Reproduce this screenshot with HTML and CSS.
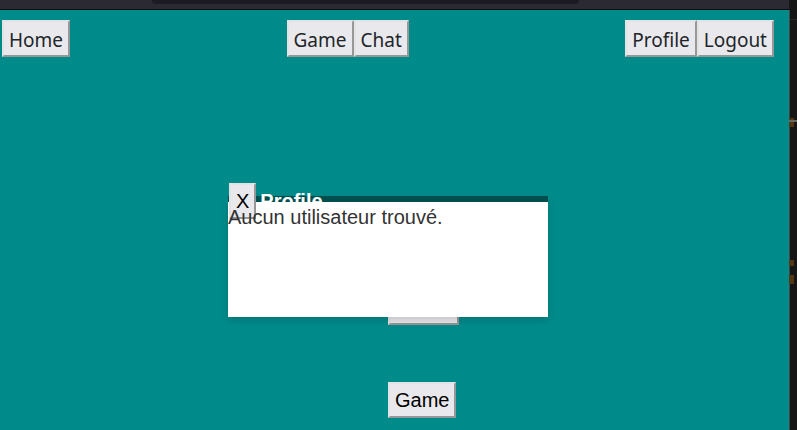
FILE: index.html
```html
<!DOCTYPE html>
<html lang="fr">
<head>
<meta charset="utf-8">
<title>Profile</title>
<meta name="viewport" content="width=device-width, initial-scale=1">
<link rel="stylesheet" href="styles.css">
</head>
<body>
<div class="browser">
  <div class="toolbar"><div class="address"></div></div>
  <div class="desktop">
    <nav class="nav">
      <div class="group"><button class="btn" type="button">Home</button></div>
      <div class="group"><button class="btn" type="button">Game</button><button class="btn" type="button">Chat</button></div>
      <div class="group"><button class="btn" type="button">Profile</button><button class="btn" type="button">Logout</button></div>
    </nav>
    <main class="workspace">
      <div class="launchers">
        <button class="btn btn-blank" type="button" aria-label="Application"></button>
        <button class="btn" type="button">Game</button>
      </div>
      <section class="window" aria-labelledby="window-title">
        <header class="titlebar">
          <button class="btn close" type="button">X</button>
          <h1 class="title" id="window-title">Profile</h1>
        </header>
        <div class="content"><p class="message">Aucun utilisateur trouvé.</p></div>
      </section>
    </main>
  </div>
</div>
<aside class="edge">
  <svg width="8" height="430" aria-hidden="true">
    <path d="M0.5 10v420" stroke="#444"/>
    <path d="M1 19.5h7" stroke="#292929"/>
    <path d="M0 118h5v9H0zM0 260h5v6H0zM0 275h5v9H0z" fill="#533612"/>
    <path d="M0 120h8v2H0z" fill="#6c6761"/>
  </svg>
</aside>
</body>
</html>
```
FILE: styles.css
```css
* {
  box-sizing: border-box;
}

body {
  margin: 0;
  min-height: 100vh;
  display: flex;
  overflow: hidden;
  background: #161616;
  font: 20px/24px "Liberation Sans", Arial, sans-serif;
  color: #333;
}

.browser {
  flex: 1;
  display: flex;
  flex-direction: column;
}

.toolbar {
  height: 10px;
  padding: 0 210px 0 152px;
  background: #2b2a33;
  border-bottom: 1px solid #0c0c0d;
}

.address {
  height: 4px;
  background: #1c1b22;
  border-radius: 0 0 4px 4px;
}

.desktop {
  flex: 1;
  display: flex;
  flex-direction: column;
  padding: 10px 13px 0 0;
  background: #008b8b;
}

.nav {
  display: flex;
  justify-content: space-between;
  padding: 0 2px;
  font-family: "Noto Sans", "Open Sans", sans-serif;
  font-size: 19px;
}

.group {
  display: flex;
}

.btn {
  height: 36px;
  padding: 0 5px;
  border: 2px solid;
  border-color: #e3e3e3 #979797 #979797 #e3e3e3;
  background: #e9e9ed;
  font: inherit;
  color: #000;
}

.nav .btn {
  height: 37px;
  padding-top: 2px;
  color: #212529;
}

.workspace {
  flex: 1;
  position: relative;
  display: flex;
}

.launchers {
  margin-left: 50%;
  padding: 232px 0 12px;
  display: flex;
  flex-direction: column;
  align-items: flex-start;
  gap: 57px;
}

.btn-blank {
  width: 71px;
}

.window {
  position: absolute;
  top: 139px;
  left: 50%;
  width: 320px;
  margin-left: -160px;
  box-shadow: 0 4px 8px rgba(0, 0, 0, 0.15);
}

.titlebar {
  height: 6px;
  padding: 4px 1px 0;
  display: flex;
  align-items: center;
  gap: 4px;
  background: #004f4f;
}

.title {
  margin: 0;
  font-size: 20px;
  line-height: 24px;
  color: #fff;
}

.close {
  flex: none;
  position: relative;
  z-index: 1;
}

.content {
  position: relative;
  height: 115px;
  background: #fff;
}

.message {
  position: relative;
  z-index: 2;
  margin: 0;
  padding-top: 3px;
}
```
